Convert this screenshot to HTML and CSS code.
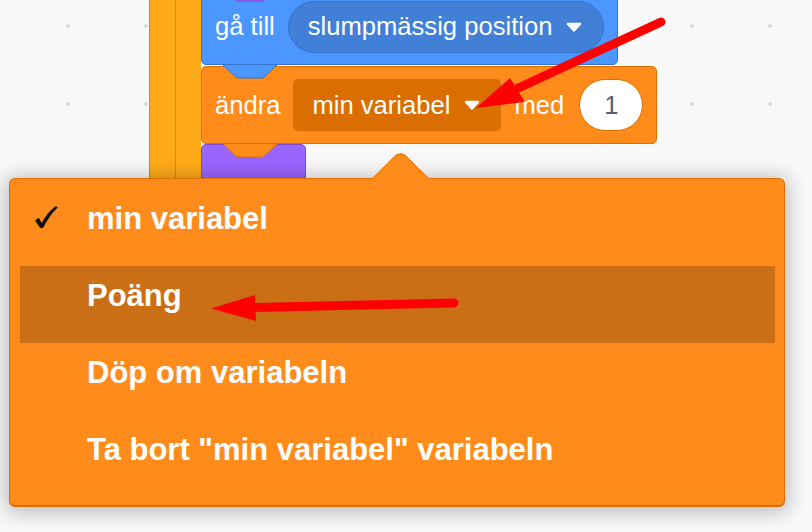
FILE: index.html
```html
<!DOCTYPE html>
<html lang="sv">
<head>
<meta charset="utf-8">
<title>Scratch – ändra variabel</title>
<link rel="stylesheet" href="styles.css">
</head>
<body>
<div class="workspace">
  <div class="script">
    <div class="arms">
      <div class="arm"></div>
      <div class="arm"></div>
    </div>
    <div class="stack">
      <div class="block motion">
        <svg class="tab tab-in" viewBox="0 0 54 14" width="54" height="14"><path d="M0 0 L14 13 H40 L54 0 Z" fill="#9966ff"/><path d="M0 0 L14 13 H40 L54 0" fill="none" stroke="#774dcb" stroke-width="1"/></svg>
        <span class="label">gå till</span>
        <div class="pill">
          <span>slumpmässig position</span>
          <svg class="caret" viewBox="0 0 16 10" width="16" height="10"><path d="M2 2 H14 L8 8.5 Z" fill="#fff" stroke="#fff" stroke-width="2.5" stroke-linejoin="round"/></svg>
        </div>
        <svg class="tab tab-out" viewBox="0 0 54 14" width="54" height="14"><path d="M0 0 L14 13 H40 L54 0 Z" fill="#4c97ff"/><path d="M0 0 L14 13 H40 L54 0" fill="none" stroke="#3373cc" stroke-width="1"/></svg>
      </div>
      <div class="block data">
        <span class="label">ändra</span>
        <div class="var-field">
          <span>min variabel</span>
          <svg class="caret" viewBox="0 0 16 10" width="16" height="10"><path d="M2 2 H14 L8 8.5 Z" fill="#fff" stroke="#fff" stroke-width="2.5" stroke-linejoin="round"/></svg>
        </div>
        <span class="label">med</span>
        <div class="num">1</div>
        <svg class="tab tab-out" viewBox="0 0 54 14" width="54" height="14"><path d="M0 0 L14 13 H40 L54 0 Z" fill="#ff8c1a"/><path d="M0 0 L14 13 H40 L54 0" fill="none" stroke="#db6e00" stroke-width="1"/></svg>
      </div>
      <div class="block looks"></div>
    </div>
  </div>

  <div class="dropdown">
    <div class="pointer"></div>
    <ul class="items">
      <li class="item">
        <svg class="check" viewBox="0 0 25 26" width="25" height="26"><path d="M1 16.5 L4.8 13.8 L7.8 19 Q13 8.5 22 2 L23.8 3.4 Q15.5 11 9 24 L6.2 24 Z" fill="#111"/></svg>
        min variabel
      </li>
      <li class="item hover">Poäng</li>
      <li class="item">Döp om variabeln</li>
      <li class="item">Ta bort "min variabel" variabeln</li>
    </ul>
  </div>

  <svg class="annotations" viewBox="0 0 812 532" width="812" height="532">
    <line x1="661" y1="22" x2="514" y2="90" stroke="#ff0000" stroke-width="9" stroke-linecap="round"/>
    <polygon points="476,108 510,78 525,102" fill="#ff0000"/>
    <line x1="454" y1="303" x2="250" y2="307.5" stroke="#ff0000" stroke-width="9" stroke-linecap="round"/>
    <polygon points="211,308.5 255,295 256,321" fill="#ff0000"/>
  </svg>
</div>
</body>
</html>
```

FILE: styles.css
```css
html, body {
  margin: 0;
  padding: 0;
}

body {
  width: 812px;
  height: 532px;
  overflow: hidden;
  background-color: #f9f9f9;
  background-image: radial-gradient(circle, #d6d6d6 0, #d6d6d6 1.4px, rgba(249, 249, 249, 0) 2.2px);
  background-size: 78px 78px;
  background-position: 29px -13px;
  font-family: "Liberation Sans", Arial, sans-serif;
}

.workspace {
  position: relative;
  width: 812px;
  height: 532px;
  overflow: hidden;
}

/* ---------- script on the canvas ---------- */
.script {
  position: absolute;
  left: 149px;
  top: -12px;
  display: flex;
}

.arms {
  display: flex;
}

.arm {
  width: 26px;
  height: 320px;
  box-sizing: border-box;
  background: #ffab19;
  border-left: 1px solid #cf8b17;
}

.stack {
  display: flex;
  flex-direction: column;
  align-items: flex-start;
}

.block {
  position: relative;
  display: flex;
  align-items: center;
  gap: 13px;
  box-sizing: border-box;
  padding: 0 13px;
  border: 1px solid;
  border-radius: 5px;
  color: #fff;
  font-size: 25.6px;
  white-space: nowrap;
}

.motion {
  height: 77px;
  background: #4c97ff;
  border-color: #3373cc;
}

.data {
  height: 78px;
  margin-top: 1px;
  background: #ff8c1a;
  border-color: #db6e00;
}

.looks {
  width: 105px;
  height: 120px;
  background: #9966ff;
  border-color: #774dcb;
}

.tab {
  position: absolute;
  left: 21px;
  display: block;
}

.tab-out {
  bottom: -15px;
  z-index: 1;
}

.tab-in {
  top: -1px;
}

.pill {
  display: flex;
  align-items: center;
  gap: 14px;
  height: 52px;
  box-sizing: border-box;
  padding: 0 21px 0 19px;
  background: #4280d7;
  border: 1px solid #3373cc;
  border-radius: 26px;
}

.var-field {
  display: flex;
  align-items: center;
  gap: 14px;
  height: 52px;
  box-sizing: border-box;
  padding: 0 21px 0 19px;
  background: #db6e00;
  border-radius: 5px;
}

.caret {
  display: block;
}

.num {
  display: flex;
  align-items: center;
  justify-content: center;
  width: 64px;
  height: 52px;
  box-sizing: border-box;
  margin-left: 2px;
  background: #fff;
  border: 1px solid #db6e00;
  border-radius: 26px;
  color: #575e75;
}

/* ---------- dropdown menu ---------- */
.dropdown {
  position: absolute;
  left: 9px;
  top: 178px;
  width: 776px;
  box-sizing: border-box;
  padding: 10px 9px 8px 10px;
  background: #ff8c1a;
  border: 1px solid #db6e00;
  border-bottom-width: 2px;
  border-radius: 6px;
  box-shadow: 0 2px 20px 4px rgba(0, 0, 0, 0.24);
  z-index: 5;
}

.pointer {
  position: absolute;
  left: 370px;
  top: -21px;
  width: 40px;
  height: 40px;
  background: #ff8c1a;
  border-top: 1px solid #db6e00;
  border-left: 1px solid #db6e00;
  border-top-left-radius: 9px;
  transform: rotate(45deg);
}

.items {
  position: relative;
  list-style: none;
  margin: 0;
  padding: 0;
}

.item {
  position: relative;
  height: 77px;
  box-sizing: border-box;
  padding: 12px 0 0 67px;
  color: #fff;
  font-size: 31px;
  font-weight: bold;
  line-height: 36px;
  white-space: nowrap;
}

.item.hover {
  background: #cb6f16;
}

.check {
  position: absolute;
  left: 14px;
  top: 15px;
  display: block;
}

/* ---------- annotations ---------- */
.annotations {
  position: absolute;
  left: 0;
  top: 0;
  z-index: 6;
  pointer-events: none;
}
```
